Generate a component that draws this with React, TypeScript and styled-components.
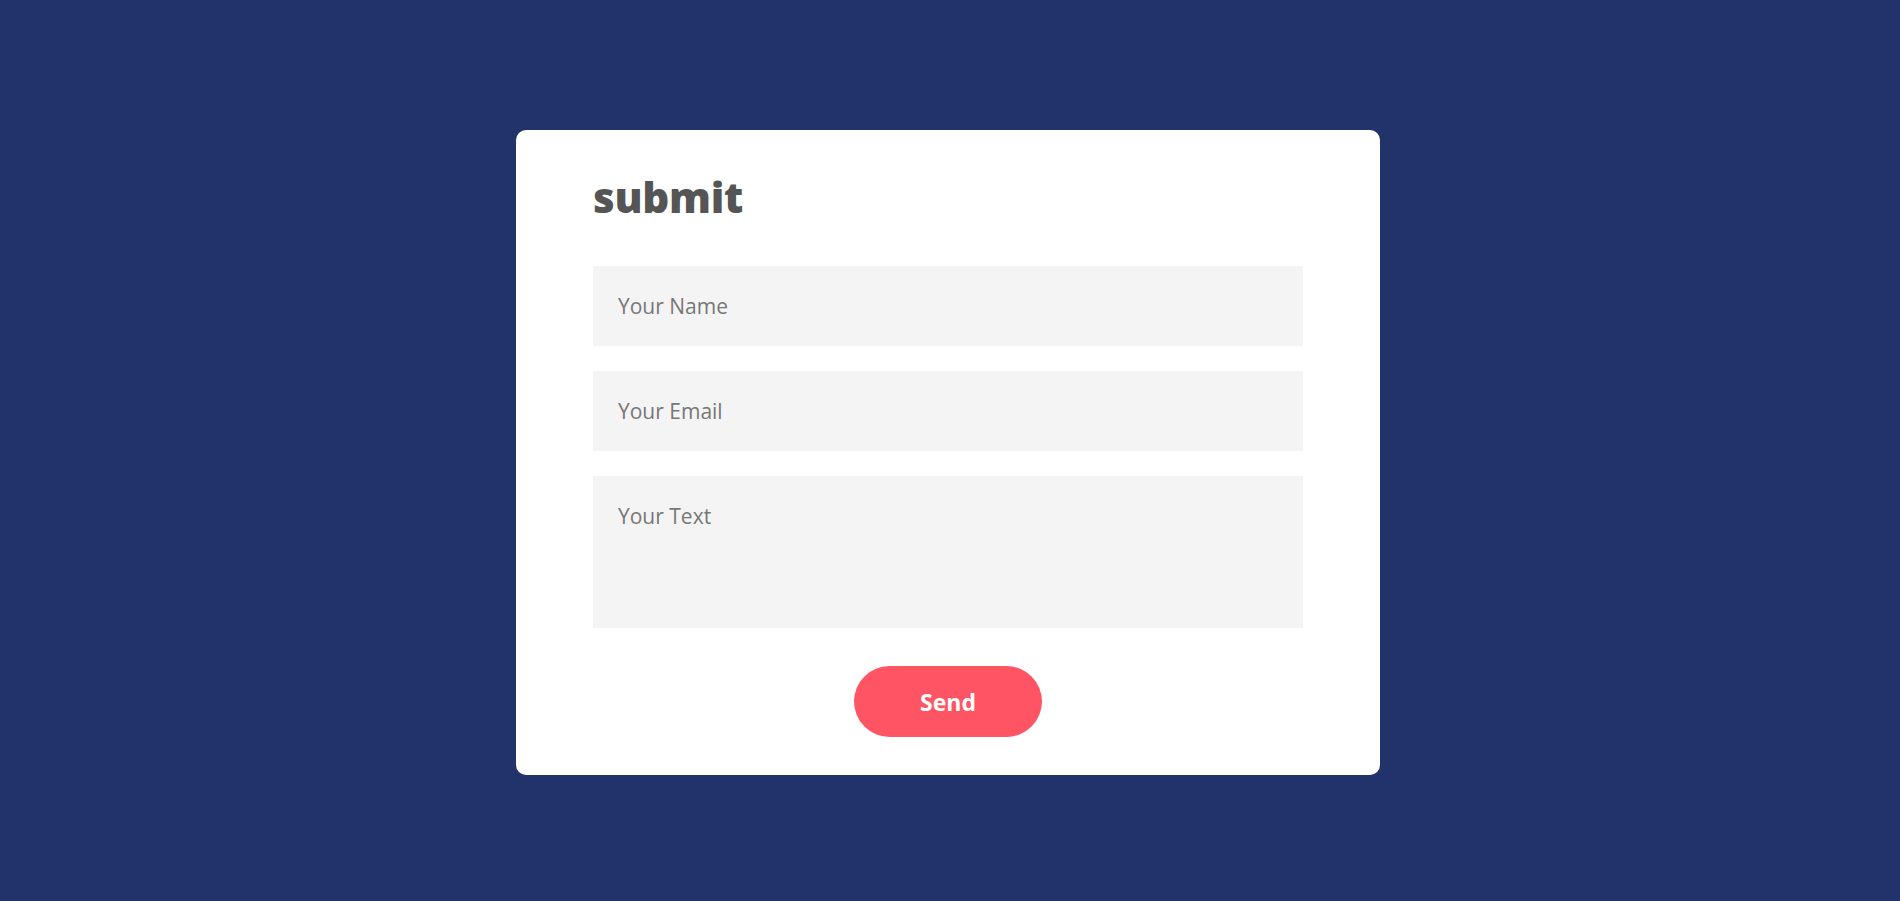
import React from "react";
import styled, { createGlobalStyle } from "styled-components";

const Global = createGlobalStyle`
  html, body { margin: 0; padding: 0; }
  body {
    background: #22336b;
    font-family: "Open Sans", "Noto Sans", sans-serif;
  }
  * { box-sizing: border-box; }
`;

const Page = styled.div`
  min-height: 901px;
  display: flex;
  justify-content: center;
  align-items: flex-start;
  padding-top: 130px;
  padding-right: 4px;
`;

const Card = styled.form`
  width: 864px;
  height: 645px;
  background: #ffffff;
  border-radius: 10px;
  padding: 0 77px;
  display: flex;
  flex-direction: column;
`;

const Title = styled.h1`
  margin: 0;
  padding-top: 37px;
  height: 136px;
  font-family: "Open Sans", sans-serif;
  font-weight: 800;
  font-size: 42px;
  line-height: 60px;
  color: #555555;
  letter-spacing: -0.3px;
`;

const Fields = styled.div`
  display: flex;
  flex-direction: column;
  gap: 25px;
`;

const fieldBase = `
  width: 100%;
  border: none;
  outline: none;
  background: #f4f4f4;
  font-family: "Open Sans", sans-serif;
  font-size: 21px;
  color: #555;
  padding: 0 25px;
  &::placeholder { color: #777777; }
`;

const Input = styled.input`
  ${fieldBase}
  height: 80px;
`;

const TextArea = styled.textarea`
  ${fieldBase}
  height: 152px;
  padding-top: 25px;
  resize: none;
  line-height: 30px;
`;

const Actions = styled.div`
  display: flex;
  justify-content: center;
  padding-top: 38px;
`;

const SendButton = styled.button`
  width: 188px;
  height: 71px;
  border: none;
  border-radius: 36px;
  background: #ff5463;
  color: #ffffff;
  font-family: "Open Sans", sans-serif;
  font-weight: 700;
  font-size: 23px;
  cursor: pointer;
`;

export default function App() {
  return (
    <>
      <Global />
      <Page>
        <Card onSubmit={(e) => e.preventDefault()}>
          <Title>submit</Title>
          <Fields>
            <Input type="text" placeholder="Your Name" />
            <Input type="email" placeholder="Your Email" />
            <TextArea placeholder="Your Text" />
          </Fields>
          <Actions>
            <SendButton type="submit">Send</SendButton>
          </Actions>
        </Card>
      </Page>
    </>
  );
}
